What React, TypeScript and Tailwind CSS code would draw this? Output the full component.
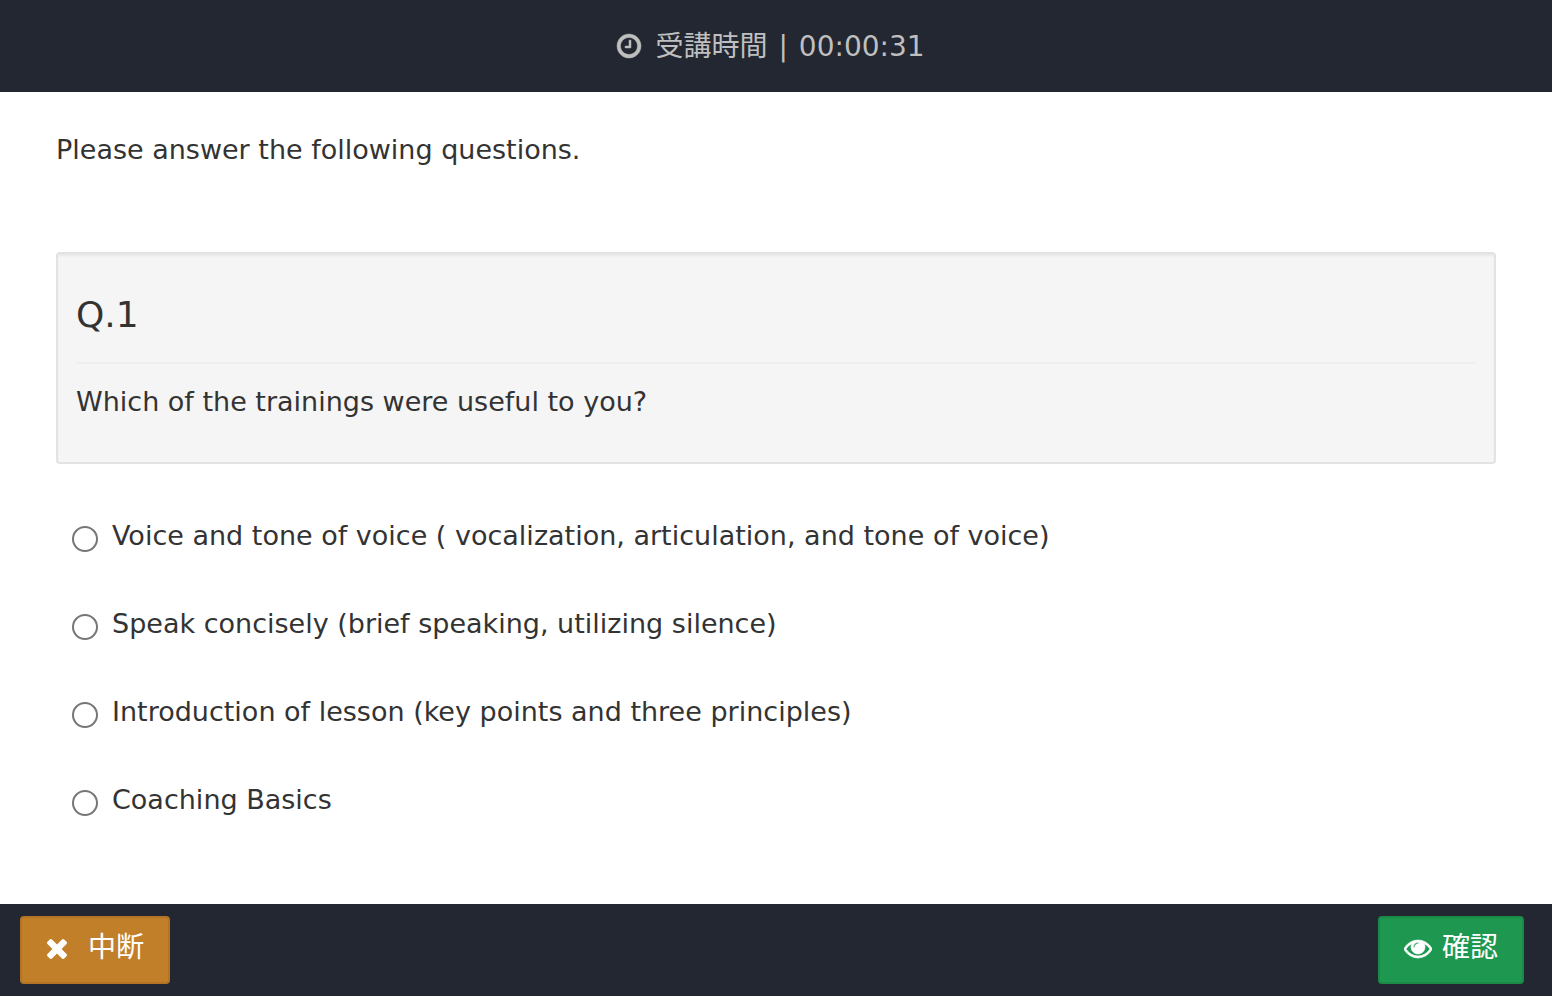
import { useState } from "react";

const iconPaths = {
  clock:
    "M896 544v448q0 14-9 23t-23 9h-320q-14 0-23-9t-9-23v-64q0-14 9-23t23-9h224v-352q0-14 9-23t23-9h64q14 0 23 9t9 23zm416 352q0-148-73-273t-198-198-273-73-273 73-198 198-73 273 73 273 198 198 273 73 273-73 198-198 73-273zm224 0q0 209-103 385.5t-279.5 279.5-385.5 103-385.5-103-279.5-279.5-103-385.5 103-385.5 279.5-279.5 385.5-103 385.5 103 279.5 279.5 103 385.5z",
  times:
    "M1490 1322q0 40-28 68l-136 136q-28 28-68 28t-68-28l-294-294-294 294q-28 28-68 28t-68-28l-136-136q-28-28-28-68t28-68l294-294-294-294q-28-28-28-68t28-68l136-136q28-28 68-28t68 28l294 294 294-294q28-28 68-28t68 28l136 136q28 28 28 68t-28 68l-294 294 294 294q28 28 28 68z",
  eye: "M1664 960q-152-236-381-353 61 104 61 225 0 185-131.5 316.5t-316.5 131.5-316.5-131.5-131.5-316.5q0-121 61-225-229 117-381 353 133 205 333.5 326.5t434.5 121.5 434.5-121.5 333.5-326.5zm-720-384q0-20-14-34t-34-14q-125 0-214.5 89.5t-89.5 214.5q0 20 14 34t34 14 34-14 14-34q0-86 61-147t147-61q20 0 34-14t14-34zm848 384q0 34-20 69-140 230-376.5 368.5t-499.5 138.5-499.5-139-376.5-368q-20-35-20-69t20-69q140-229 376.5-368t499.5-139 499.5 139 376.5 368q20 35 20 69z",
};

const options = [
  "Voice and tone of voice ( vocalization, articulation, and tone of voice)",
  "Speak concisely (brief speaking, utilizing silence)",
  "Introduction of lesson (key points and three principles)",
  "Coaching Basics",
];

export default function App() {
  const [answer, setAnswer] = useState<number | null>(null);

  return (
    <div className="flex min-h-screen flex-col bg-white font-['DejaVu_Sans','Noto_Sans_CJK_JP',sans-serif] text-[27px] leading-[40px] text-[#333]">
      <header className="flex h-[92px] items-center justify-center bg-[#232731] pr-[10px] text-[28px] text-[#bfbfbf]">
        <svg viewBox="0 0 1536 1792" className="mr-[14px] h-7 w-6 fill-current stroke-current" strokeWidth={30} overflow="visible" aria-hidden="true">
          <path d={iconPaths.clock} />
        </svg>
        <p className="flex gap-[11px] pt-px">
          <span>受講時間</span>
          <span>|</span>
          <span>00:00:31</span>
        </p>
      </header>

      <main className="grow px-14 pt-[38px]">
        <p>Please answer the following questions.</p>

        <section className="mt-[82px] rounded-[4px] border-2 border-[#e3e3e3] bg-[#f5f5f5] px-[18px] pt-9 pb-10 shadow-[inset_0_2px_2px_rgba(0,0,0,0.05)]">
          <h1 className="border-b-2 border-[#eee] pb-[22px] text-[36px] leading-[50px]">Q.1</h1>
          <p className="mt-[18px]">Which of the trainings were useful to you?</p>
        </section>

        <fieldset className="mt-[52px] flex flex-col gap-12 pl-4">
          {options.map((option, i) => (
            <label key={option} className="flex items-center gap-[14px]">
              <input
                type="radio"
                name="answer"
                checked={answer === i}
                onChange={() => setAnswer(i)}
                className="mt-[6px] size-[26px] shrink-0 appearance-none rounded-full border-2 border-[#767676] bg-white checked:border-[8px] checked:border-[#0075ff]"
              />
              <span>{option}</span>
            </label>
          ))}
        </fieldset>
      </main>

      <footer className="flex h-[92px] items-center justify-between bg-[#232731] pr-7 pl-5 text-[28px] text-white">
        <button className="flex h-[68px] items-center gap-5 rounded-[4px] border-2 border-[#b37426] bg-[#c17f29] px-6 pb-[2px]">
          <svg viewBox="302 366 1188 1188" className="h-5 w-[22px] fill-current" aria-hidden="true">
            <path d={iconPaths.times} />
          </svg>
          <span className="pb-[2px]">中断</span>
        </button>
        <button className="flex h-[68px] items-center gap-[10px] rounded-[4px] border-2 border-[#1b8a47] bg-[#1e9850] px-6 pb-[2px]">
          <svg viewBox="0 64 1792 1792" className="size-7 fill-current stroke-current" strokeWidth={40} aria-hidden="true">
            <path d={iconPaths.eye} />
          </svg>
          <span className="pb-[2px]">確認</span>
        </button>
      </footer>
    </div>
  );
}
